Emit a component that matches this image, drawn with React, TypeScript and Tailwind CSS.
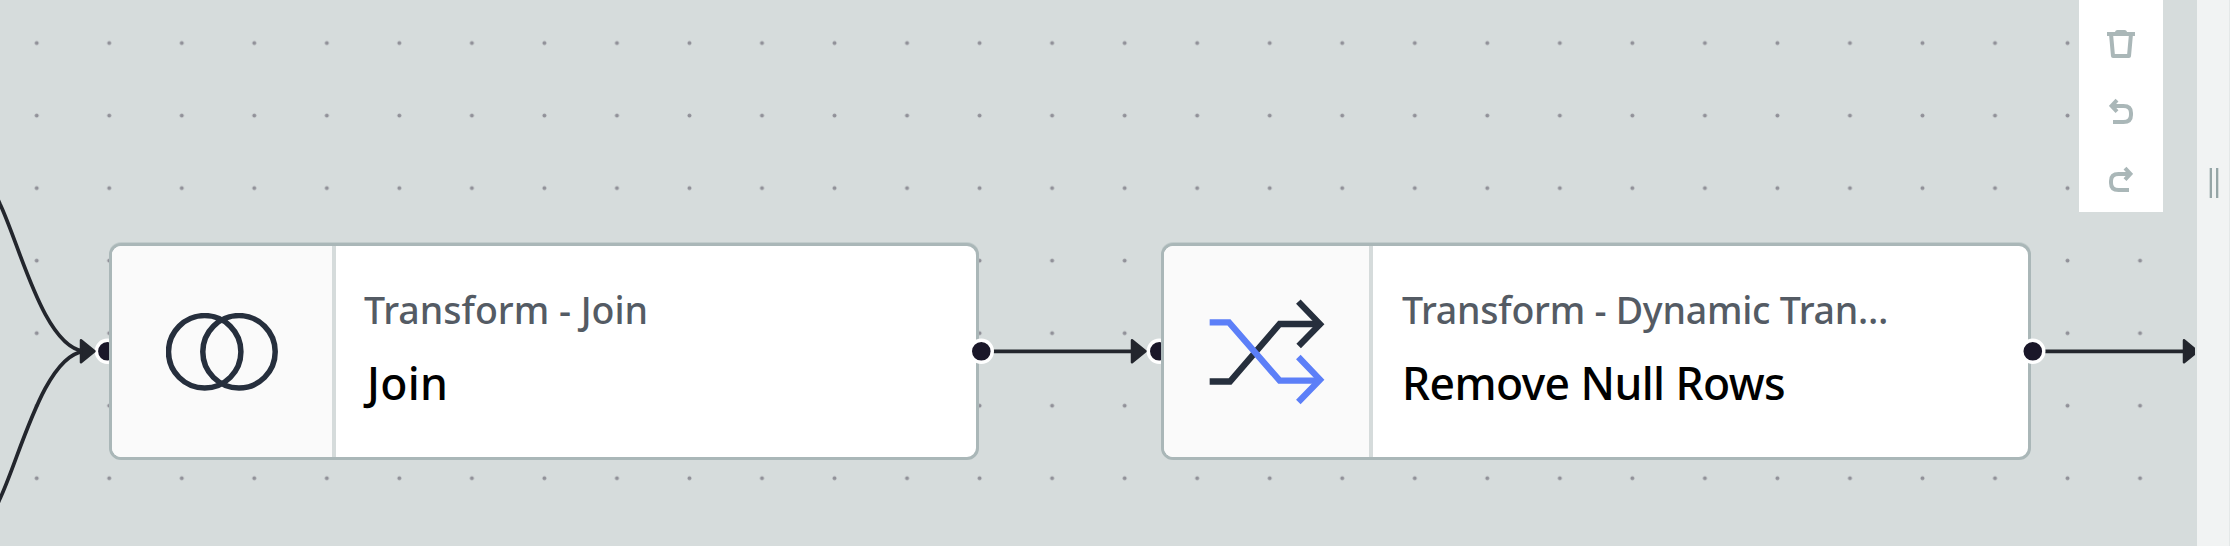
import type { ReactNode } from "react";

function JoinIcon() {
  return (
    <svg className="h-[78px] w-[113px]" viewBox="0 0 113 78" fill="none" stroke="#262f3d" strokeWidth="5.5">
      <circle cx="38.7" cy="38.8" r="36.2" />
      <circle cx="73" cy="38.8" r="36.2" />
    </svg>
  );
}

function ShuffleIcon() {
  return (
    <svg className="h-[108px] w-[116px]" viewBox="808 204 348 324" fill="none" strokeWidth="19">
      <g stroke="#262f3d">
        <path d="M810 454.500H871L1020 282H1140" />
        <path d="M1076 215L1141 282.500L1077 348" />
      </g>
      <g stroke="#5c7ff8">
        <path d="M810 277H868L1020 452H1140" />
        <path d="M1076 381L1141 449L1076 516" />
      </g>
    </svg>
  );
}

function TrashIcon() {
  return (
    <svg className="h-7 w-7" viewBox="0 0 28 28" fill="none" stroke="#aab7b8" strokeWidth="4">
      <path d="M0 4H28" />
      <path d="M8 2.500Q8 0 10.500 0H17.500Q20 0 20 2.500Z" fill="#aab7b8" stroke="none" />
      <path d="M4.100 5L6 26H22L23.900 5" strokeLinejoin="round" />
    </svg>
  );
}

function UndoIcon({ flipped = false }: { flipped?: boolean }) {
  return (
    <svg
      className={flipped ? "h-[26px] w-6 -scale-x-100" : "h-[26px] w-6"}
      viewBox="0 0 24 26"
      fill="none"
      stroke="#aab7b8"
      strokeWidth="4"
    >
      <path d="M4 8H14.500Q22 8 22 15V17Q22 24 14.500 24H4" />
      <path d="M8 2.200L2.600 7.900L8 13.600" />
    </svg>
  );
}

function TransformNode({
  place,
  iconBox,
  icon,
  kind,
  kindStyle,
  name,
  nameStyle,
}: {
  place: string;
  iconBox: string;
  icon: ReactNode;
  kind: string;
  kindStyle: string;
  name: string;
  nameStyle: string;
}) {
  return (
    <div
      className={`absolute top-[243px] flex h-[217px] overflow-hidden rounded-[12px] border-[3px] border-[#aab7b8] bg-white shadow-[0_-1px_0_0_#c2cccc] ${place}`}
    >
      <div className={`flex shrink-0 items-center border-r-4 border-[#d5dbdb] bg-[#fafafa] ${iconBox}`}>{icon}</div>
      <div className="flex min-w-0 flex-1 flex-col pt-[36px] pl-[29px] whitespace-nowrap">
        <div className={`h-[56px] text-[37.500px] leading-[56px] font-medium text-[#545b64] ${kindStyle}`}>{kind}</div>
        <div className={`mt-[15px] h-[60px] text-[44.500px] leading-[60px] font-medium text-black ${nameStyle}`}>
          {name}
        </div>
      </div>
    </div>
  );
}

function Port({ x }: { x: number }) {
  return <circle cx={x} cy="351.300" r="11" fill="#1a1729" stroke="#fff" strokeWidth="3.400" />;
}

function ArrowHead({ x }: { x: number }) {
  return (
    <path
      d={`M${x + 1} 340.300L${x + 14.500} 351.300L${x + 1} 362.300Z`}
      fill="#23262d"
      stroke="#23262d"
      strokeWidth="2.500"
      strokeLinejoin="round"
    />
  );
}

export default function App() {
  return (
    <div className="flex h-[546px] w-[2230px] overflow-hidden bg-[#d6dcdc] font-['Noto_Sans',sans-serif]">
      <main className="relative flex-1 overflow-hidden">
        <svg className="absolute inset-0 h-[546px] w-[2195px]" fill="none">
          <defs>
            <pattern id="grid" x="0.450" y="6.800" width="72.530" height="72.530" patternUnits="userSpaceOnUse">
              <circle cx="36.260" cy="36.260" r="2" fill="#919199" />
            </pattern>
          </defs>
          <rect width="2195" height="546" fill="url(#grid)" />
          <g stroke="#23262d" strokeWidth="3.700">
            <path d="M-4 195L0 204C20 246 44 347 84 351.300" />
            <path d="M-4 507.600L0 498.600C20 456.600 44 355.600 84 351.300" />
            <path d="M982 351.300H1133M2033 351.300H2185" />
          </g>
          <Port x={107.4} />
          <Port x={1159.3} />
          <ArrowHead x={80} />
          <ArrowHead x={1131} />
          <ArrowHead x={2183} />
        </svg>

        <TransformNode
          place="left-[109px] w-[870px]"
          iconBox="w-[224px] pl-[54px]"
          icon={<JoinIcon />}
          kind="Transform - Join"
          kindStyle="-ml-px tracking-[0px]"
          name="Join"
          nameStyle="pl-[2px] tracking-[0.300px]"
        />
        <TransformNode
          place="left-[1161px] w-[870px]"
          iconBox="w-[209px] pl-[45px]"
          icon={<ShuffleIcon />}
          kind="Transform - Dynamic Tran…"
          kindStyle="tracking-[-0.250px]"
          name="Remove Null Rows"
          nameStyle="tracking-[-0.600px]"
        />

        <svg className="pointer-events-none absolute inset-0 h-[546px] w-[2195px]">
          <Port x={981.3} />
          <Port x={2032.8} />
        </svg>

        <div className="absolute top-0 left-[2079px] flex h-[212px] w-[84px] flex-col items-center bg-white pt-[30px]">
          <button className="h-7" aria-label="Delete">
            <TrashIcon />
          </button>
          <button className="mt-10 h-[26px]" aria-label="Undo">
            <UndoIcon />
          </button>
          <button className="mt-[42px] h-[26px]" aria-label="Redo">
            <UndoIcon flipped />
          </button>
        </div>
      </main>
      <aside className="flex w-[33px] shrink-0 border-r border-[#e4e8e8] bg-[#f1f3f3] pt-[168px] pl-[12px]">
        <div className="flex h-[30px] gap-[4px]">
          <div className="w-[3px] border-l border-[#d3dada] bg-[#95a5a6]" />
          <div className="w-[3px] border-r border-[#d3dada] bg-[#95a5a6]" />
        </div>
      </aside>
    </div>
  );
}
